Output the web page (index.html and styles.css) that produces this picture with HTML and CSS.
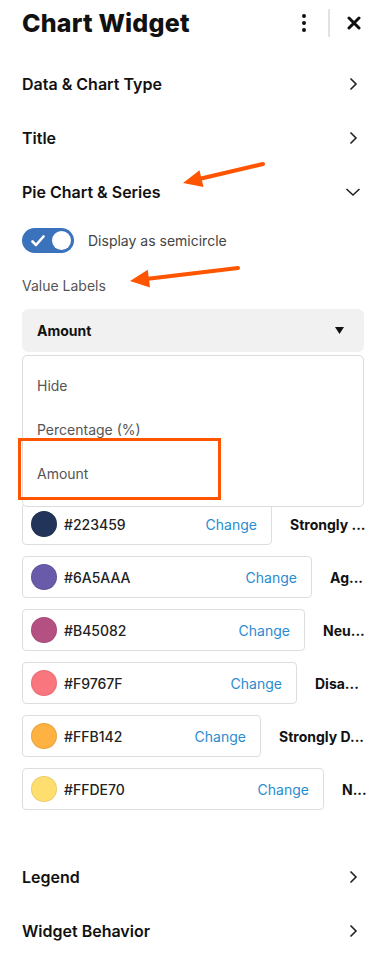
FILE: index.html
```html
<!DOCTYPE html>
<html lang="en">
<head>
  <meta charset="UTF-8">
  <meta name="viewport" content="width=device-width, initial-scale=1.0">
  <title>Chart Widget</title>
  <link rel="stylesheet" href="styles.css">
</head>
<body>
  <div class="panel">
    <div class="panel-header">
      <h1>Chart Widget</h1>
      <div class="header-actions">
        <svg class="kebab" width="4" height="18" viewBox="0 0 4 18"><circle cx="2" cy="2" r="2"/><circle cx="2" cy="9" r="2"/><circle cx="2" cy="16" r="2"/></svg>
        <span class="divider"></span>
        <svg class="close" width="14" height="14" viewBox="0 0 14 14"><path d="M2 2L12 12M12 2L2 12" stroke="#111" stroke-width="3" stroke-linecap="round"/></svg>
      </div>
    </div>

    <div class="section-row">
      <span>Data &amp; Chart Type</span>
      <svg class="chev" width="10" height="14" viewBox="0 0 10 14"><path d="M2.5 1.5L8 7L2.5 12.5" fill="none" stroke="#222" stroke-width="1.6"/></svg>
    </div>
    <div class="section-row">
      <span>Title</span>
      <svg class="chev" width="10" height="14" viewBox="0 0 10 14"><path d="M2.5 1.5L8 7L2.5 12.5" fill="none" stroke="#222" stroke-width="1.6"/></svg>
    </div>
    <div class="section-row">
      <span>Pie Chart &amp; Series</span>
      <svg class="chev-down" width="16" height="10" viewBox="0 0 16 10"><path d="M1.5 2L8 8L14.5 2" fill="none" stroke="#222" stroke-width="1.6"/></svg>
    </div>

    <div class="section-body">
      <div class="toggle-row">
        <div class="toggle">
          <svg width="14" height="12" viewBox="0 0 14 12"><path d="M1.5 6.5L5 10L12.5 1.5" fill="none" stroke="#fff" stroke-width="2.6" stroke-linecap="round" stroke-linejoin="round"/></svg>
          <span class="knob"></span>
        </div>
        <span class="toggle-label">Display as semicircle</span>
      </div>

      <div class="field-label">Value Labels</div>
      <div class="select-wrap">
        <div class="select">
          <span>Amount</span>
          <svg width="9" height="7" viewBox="0 0 9 7"><path d="M0 0H9L4.5 7Z" fill="#111"/></svg>
        </div>
        <ul class="menu">
          <li>Hide</li>
          <li>Percentage (%)</li>
          <li>Amount</li>
        </ul>
      </div>

      <div class="colors">
        <div class="color-row">
          <div class="swatch-box" style="width:250px"><span class="dot" style="background:#223459"></span><span class="hex">#223459</span><a class="change">Change</a></div>
          <span class="series-name">Strongly ...</span>
        </div>
        <div class="color-row">
          <div class="swatch-box" style="width:290px"><span class="dot" style="background:#6A5AAA"></span><span class="hex">#6A5AAA</span><a class="change">Change</a></div>
          <span class="series-name">Ag...</span>
        </div>
        <div class="color-row">
          <div class="swatch-box" style="width:283px"><span class="dot" style="background:#B45082"></span><span class="hex">#B45082</span><a class="change">Change</a></div>
          <span class="series-name">Neu...</span>
        </div>
        <div class="color-row">
          <div class="swatch-box" style="width:275px"><span class="dot" style="background:#F9767F"></span><span class="hex">#F9767F</span><a class="change">Change</a></div>
          <span class="series-name">Disa...</span>
        </div>
        <div class="color-row">
          <div class="swatch-box" style="width:239px"><span class="dot" style="background:#FFB142"></span><span class="hex">#FFB142</span><a class="change">Change</a></div>
          <span class="series-name">Strongly D...</span>
        </div>
        <div class="color-row">
          <div class="swatch-box" style="width:302px"><span class="dot" style="background:#FFDE70"></span><span class="hex">#FFDE70</span><a class="change">Change</a></div>
          <span class="series-name">N...</span>
        </div>
      </div>
    </div>

    <div class="section-row">
      <span>Legend</span>
      <svg class="chev" width="10" height="14" viewBox="0 0 10 14"><path d="M2.5 1.5L8 7L2.5 12.5" fill="none" stroke="#222" stroke-width="1.6"/></svg>
    </div>
    <div class="section-row">
      <span>Widget Behavior</span>
      <svg class="chev" width="10" height="14" viewBox="0 0 10 14"><path d="M2.5 1.5L8 7L2.5 12.5" fill="none" stroke="#222" stroke-width="1.6"/></svg>
    </div>
  </div>

  <!-- annotations -->
  <div class="highlight"></div>
  <svg class="arrows" width="386" height="954" viewBox="0 0 386 954">
    <line x1="263" y1="164" x2="199" y2="179" stroke="#ff5500" stroke-width="4" stroke-linecap="round"/>
    <polygon points="183,183 199.5,170.3 203.5,186.9" fill="#ff5500"/>
    <line x1="238" y1="268" x2="146" y2="279" stroke="#ff5500" stroke-width="4" stroke-linecap="round"/>
    <polygon points="130,281 147.8,269.8 150,287.6" fill="#ff5500"/>
  </svg>
</body>
</html>
```

FILE: styles.css
```css
body {
  margin: 0;
  font-family: Inter, "Noto Sans", sans-serif;
  color: #111;
  background: #fff;
}
.panel {
  width: 386px;
  padding: 0 22px;
  box-sizing: border-box;
}
.panel-header {
  display: flex;
  align-items: center;
  height: 46px;
  margin-bottom: 11px;
}
.panel-header h1 {
  margin: 0;
  font-size: 25px;
  font-weight: 800;
  letter-spacing: 0.2px;
}
.header-actions {
  margin-left: auto;
  display: flex;
  align-items: center;
  margin-right: 3px;
}
.kebab {
  fill: #111;
}
.divider {
  width: 2px;
  height: 28px;
  background: #e2e2e2;
  margin: 0 17px 0 22px;
}
.section-row {
  display: flex;
  align-items: center;
  justify-content: space-between;
  height: 54px;
  font-size: 16px;
  font-weight: 600;
}
.chev {
  margin-right: 6px;
}
.chev-down {
  margin-right: 3px;
}
.section-body {
  padding-bottom: 40px;
}
.toggle-row {
  display: flex;
  align-items: center;
  margin-top: 9px;
}
.toggle {
  width: 52px;
  height: 25px;
  border-radius: 13px;
  background: #3a73bc;
  display: flex;
  align-items: center;
  justify-content: space-between;
  padding: 0 3px 0 9px;
  box-sizing: border-box;
}
.knob {
  width: 19px;
  height: 19px;
  border-radius: 50%;
  background: #fff;
}
.toggle-label {
  margin-left: 14px;
  font-size: 14px;
  color: #444;
}
.field-label {
  margin-top: 24px;
  font-size: 14px;
  line-height: 18px;
  color: #555;
}
.select-wrap {
  position: relative;
  margin-top: 14px;
}
.select {
  height: 43px;
  background: #f1f1f1;
  border-radius: 6px;
  display: flex;
  align-items: center;
  justify-content: space-between;
  padding: 0 20px 0 15px;
  font-size: 14px;
  font-weight: 700;
}
.menu {
  position: absolute;
  top: 46px;
  left: 0;
  right: 0;
  z-index: 2;
  margin: 0;
  padding: 8px 0 10px;
  list-style: none;
  background: #fff;
  border: 1px solid #dcdcdc;
  border-radius: 5px;
}
.menu li {
  height: 44px;
  line-height: 44px;
  padding-left: 14px;
  font-size: 14px;
  color: #555;
}
.colors {
  margin-top: 151px;
  display: flex;
  flex-direction: column;
  gap: 11px;
}
.color-row {
  display: flex;
  align-items: center;
  gap: 18px;
}
.swatch-box {
  flex: none;
  height: 42px;
  box-sizing: border-box;
  border: 1.5px solid #dedede;
  border-radius: 4px;
  display: flex;
  align-items: center;
  padding: 0 14px 0 8px;
}
.dot {
  width: 26px;
  height: 26px;
  border-radius: 50%;
  box-shadow: inset 0 0 0 1px rgba(0, 0, 0, 0.08);
  margin-right: 7px;
}
.hex {
  font-size: 14px;
  font-weight: 500;
  color: #222;
}
.change {
  margin-left: auto;
  font-size: 14px;
  color: #2b8bd0;
}
.series-name {
  white-space: nowrap;
  font-size: 14px;
  font-weight: 700;
}
.highlight {
  position: absolute;
  left: 18px;
  top: 438px;
  width: 203px;
  height: 62px;
  box-sizing: border-box;
  border: 3px solid #ff5500;
  z-index: 3;
}
.arrows {
  position: absolute;
  left: 0;
  top: 0;
  pointer-events: none;
  z-index: 4;
}
```
